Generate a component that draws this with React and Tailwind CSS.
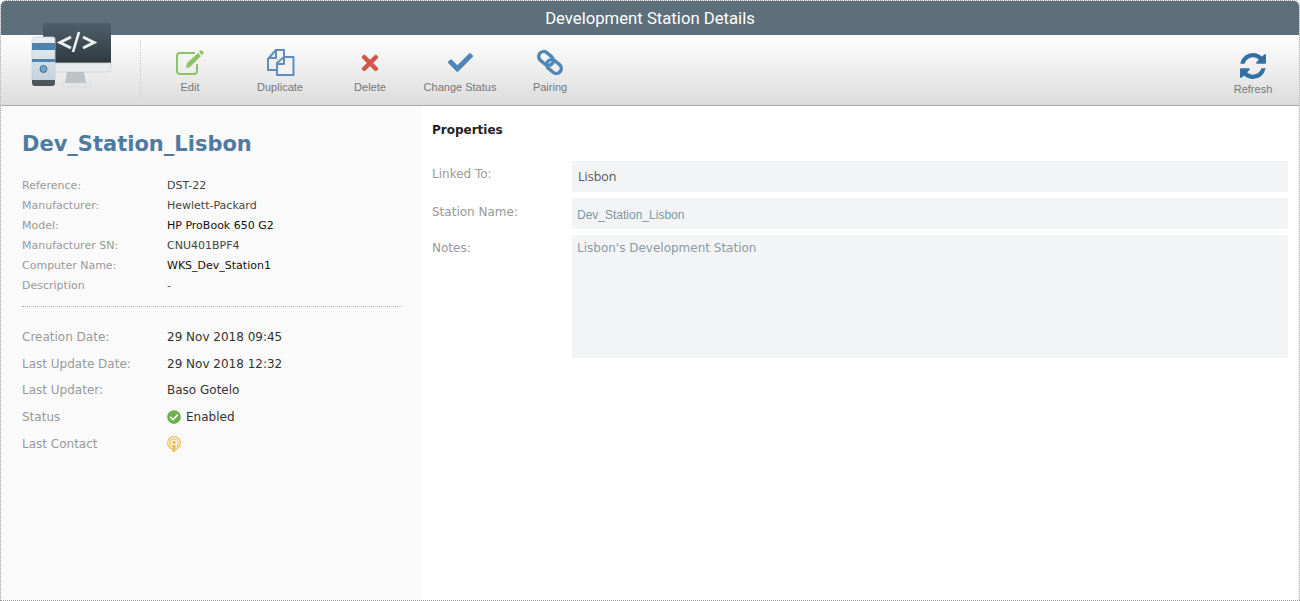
import React from 'react';
import { FaCheck, FaCheckCircle, FaTimes } from 'react-icons/fa';

const LogoIcon = () => (
    <svg width="84" height="68" viewBox="0 0 84 68" className="absolute left-[29px] top-[-12px]">
        <defs>
            <linearGradient id="screen" x1="0" y1="0" x2="0" y2="1">
                <stop offset="0" stopColor="#4f5f69" />
                <stop offset="1" stopColor="#2f3a40" />
            </linearGradient>
            <linearGradient id="tower" x1="0" y1="0" x2="0" y2="1">
                <stop offset="0" stopColor="#eaf0f4" />
                <stop offset="1" stopColor="#c3d2db" />
            </linearGradient>
        </defs>
        <path d="M13 2q0-2 2-2h64q2 0 2 2v38H13z" fill="url(#screen)" />
        <path d="M13 40h68v5q0 4-4 4H17q-4 0-4-4z" fill="#e8ebed" stroke="#cdd3d7" strokeWidth="0.800" />
        <path d="M37 49h17l2 11H35z" fill="#bcc2c6" />
        <rect x="33" y="60" width="28" height="4" rx="2" fill="#e3e6e8" stroke="#d0d4d7" strokeWidth="0.600" />
        <path d="M41 14l-11 5.500 11 5.500M53 14l11 5.500-11 5.500" fill="none" stroke="#eef1f3" strokeWidth="3" />
        <path d="M43 29l6-20" stroke="#eef1f3" strokeWidth="2.600" />
        <path d="M2 16q0-2 2-2h19q2 0 2 2v41H2z" fill="url(#tower)" stroke="#c5ced4" strokeWidth="0.800" />
        <path d="M2 57h23v3q0 3-3 3H5q-3 0-3-3z" fill="#4a555c" />
        <rect x="2" y="20" width="23" height="7" fill="#4f83ab" />
        <rect x="2" y="36" width="23" height="3" fill="#4f83ab" />
        <circle cx="13.500" cy="46" r="3.500" fill="#6fa3c8" stroke="#3f6f95" />
    </svg>
);

const EditIcon = () => (
    <svg width="28" height="26" viewBox="0 0 28 26">
        <path d="M21 14v7q0 3-3 3H4q-3 0-3-3V6q0-3 3-3h15" fill="none" stroke="#8cc465" strokeWidth="2" />
        <path d="M11 13L22 3l3 3-11 11-4 1z" fill="#8cc465" />
        <path d="M23 2l1.500-1.500q1-.5 1.500 0l1.500 1.500q.5 1 0 1.500L26 5z" fill="#8cc465" />
    </svg>
);

const DuplicateIcon = () => (
    <svg width="29" height="28" viewBox="0 0 29 28" fill="none" stroke="#5f8dbd" strokeWidth="2" strokeLinejoin="round">
        <path d="M10 22H2v-11l8-9h8v7" />
        <path d="M10 2v8H2" />
        <path d="M18 9h9.500v18H11v-12z" fill="#f2f2f2" />
        <path d="M18 9v7h-7" />
    </svg>
);

const PairingIcon = () => (
    <svg width="26" height="27" viewBox="0 0 26 27" fill="none" stroke="#4e86b8" strokeWidth="3.400">
        <rect x="1" y="4.500" width="16" height="10" rx="5" transform="rotate(40 9 9.500)" />
        <rect x="9" y="12.500" width="16" height="10" rx="5" transform="rotate(40 17 17.500)" />
    </svg>
);

const RefreshIcon = () => (
    <svg width="26" height="26" viewBox="128 128 1536 1536" fill="#336fa3" className="mb-[-1px]">
        <path d="M1639 1056q0 5-1 7-64 268-268 434.500t-478 166.500q-146 0-282.500-55t-243.500-157l-129 129q-19 19-45 19t-45-19-19-45v-448q0-26 19-45t45-19h448q26 0 45 19t19 45-19 45l-137 137q71 66 161 102t187 36q134 0 250-65t186-179q11-17 53-117 8-23 30-23h192q13 0 22.500 9.500t9.500 22.500zm25-800v448q0 26-19 45t-45 19h-448q-26 0-45-19t-19-45 19-45l138-138q-148-137-349-137-134 0-250 65t-186 179q-11 17-53 117-8 23-30 23h-199q-13 0-22.500-9.500t-9.500-22.500v-7q65-268 270-434.500t480-166.500q146 0 284 55.500t245 156.500l130-129q19-19 45-19t45 19 19 45z" />
    </svg>
);

const PodcastIcon = () => (
    <svg width="14" height="17" viewBox="0 0 14 17" fill="none" stroke="#efbb5a">
        <circle cx="7" cy="7" r="6.300" strokeWidth="1.300" />
        <circle cx="7" cy="7" r="4" strokeWidth="1.200" />
        <circle cx="7" cy="6.500" r="1.800" fill="#efbb5a" stroke="none" />
        <path d="M5.500 9h3v6.500q-1.500 1-3 0z" fill="#efbb5a" stroke="none" />
    </svg>
);

const ToolButton = ({ icon, label }) => (
    <div className="flex h-full w-[90px] flex-col items-center">
        <div className="flex h-[41px] items-end justify-center">{icon}</div>
        <span className="mt-[3px] font-['Liberation_Sans',sans-serif] text-[11px] leading-[16px] text-[#777]">{label}</span>
    </div>
);

const InfoRow = ({ label, value, dark }) => (
    <div className="flex h-[20px] items-center text-[11px]">
        <span className="w-[145px] text-[#999]">{label}</span>
        <span className={dark ? 'text-[#111]' : 'text-[#444]'}>{value}</span>
    </div>
);

const DateRow = ({ label, children }) => (
    <div className="flex h-[26.800px] items-center text-[12px]">
        <span className="w-[145px] text-[#999]">{label}</span>
        <span className="flex items-center text-[#333]">{children}</span>
    </div>
);

const App = () => {
    return (
        <div className="flex h-[601px] w-[1300px] flex-col overflow-hidden rounded-t-[6px] border border-dotted border-[#999] bg-white font-['DejaVu_Sans',sans-serif]">
            <div className="flex h-[34px] shrink-0 items-center justify-center bg-[#5c6f7b] pt-[2px] font-['Roboto',sans-serif] text-[16.700px] text-white">
                Development Station Details
            </div>

            <div className="relative flex h-[71px] shrink-0 border-b border-[#aaa] bg-gradient-to-b from-white to-[#dcdcdc]">
                <LogoIcon />
                <div className="mt-[5px] ml-[139px] h-[58px] border-l border-dotted border-[#ccc]" />
                <div className="ml-[4px] flex">
                    <ToolButton icon={<EditIcon />} label="Edit" />
                    <ToolButton icon={<DuplicateIcon />} label="Duplicate" />
                    <ToolButton icon={<FaTimes className="mb-[1px] text-[24px] text-[#d0574a]" />} label="Delete" />
                    <ToolButton icon={<FaCheck className="mb-[1px] text-[25px] text-[#4e86b8]" />} label="Change Status" />
                    <ToolButton icon={<PairingIcon />} label="Pairing" />
                </div>
                <div className="ml-auto mr-[1px] pt-[2px]">
                    <ToolButton icon={<RefreshIcon />} label="Refresh" />
                </div>
            </div>

            <div className="flex min-h-0 flex-1">
                <div className="w-[421px] shrink-0 bg-[#fafafa] pl-[21px] pr-[20px] pt-[24px]">
                    <h1 className="text-[21px] font-bold leading-[28px] text-[#4e7ba1]">Dev_Station_Lisbon</h1>
                    <div className="mt-[18px] border-b border-dotted border-[#aaa] pb-[10px]">
                        <InfoRow label="Reference:" value="DST-22" />
                        <InfoRow label="Manufacturer:" value="Hewlett-Packard" />
                        <InfoRow label="Model:" value="HP ProBook 650 G2" dark />
                        <InfoRow label="Manufacturer SN:" value="CNU401BPF4" />
                        <InfoRow label="Computer Name:" value="WKS_Dev_Station1" dark />
                        <InfoRow label="Description" value="-" />
                    </div>
                    <div className="mt-[16.500px]">
                        <DateRow label="Creation Date:">29 Nov 2018 09:45</DateRow>
                        <DateRow label="Last Update Date:">29 Nov 2018 12:32</DateRow>
                        <DateRow label="Last Updater:">Baso Gotelo</DateRow>
                        <DateRow label="Status">
                            <FaCheckCircle className="mr-[5px] text-[14px] text-[#6ab04c]" />
                            Enabled
                        </DateRow>
                        <DateRow label="Last Contact">
                            <PodcastIcon />
                        </DateRow>
                    </div>
                </div>

                <div className="min-w-0 flex-1 pl-[10px] pr-[11px] pt-[16px]">
                    <h2 className="text-[12px] font-bold leading-[16px] text-[#222]">Properties</h2>
                    <div className="mt-[23px] flex flex-col gap-[6px]">
                        <div className="flex">
                            <span className="w-[140px] pt-[5px] text-[12px] leading-[16px] text-[#999]">Linked To:</span>
                            <div className="flex h-[31px] flex-1 items-center bg-[#f3f4f6] pl-[6px] pt-[2px] font-['Open_Sans',sans-serif] text-[12.500px] text-[#555]">Lisbon</div>
                        </div>
                        <div className="flex">
                            <span className="w-[140px] pt-[6px] text-[12px] leading-[16px] text-[#999]">Station Name:</span>
                            <div className="flex h-[31px] flex-1 items-center bg-[#f3f4f6] pl-[5px] pt-[2px] font-['Liberation_Sans',sans-serif] text-[12px] text-[#7d97a3]">Dev_Station_Lisbon</div>
                        </div>
                        <div className="flex">
                            <span className="w-[140px] pt-[5px] text-[12px] leading-[16px] text-[#999]">Notes:</span>
                            <div className="h-[123px] flex-1 bg-[#f3f4f6] pl-[5px] pt-[5px] text-[12px] leading-[16px] text-[#8a9ba5]">Lisbon's Development Station</div>
                        </div>
                    </div>
                </div>
            </div>
        </div>
    );
};

export default App;
